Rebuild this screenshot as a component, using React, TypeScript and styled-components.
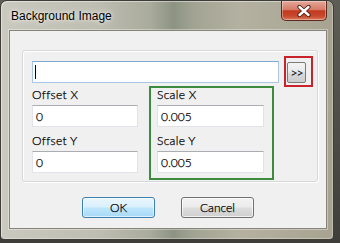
import React from 'react'
import styled, {createGlobalStyle} from 'styled-components'

const GlobalStyle = createGlobalStyle`
  html, body {
    margin: 0;
    padding: 0;
    background: #4a4944;
  }
  body {
    width: 340px;
    height: 243px;
    overflow: hidden;
    font-family: "Liberation Sans", Arial, sans-serif;
  }
`

const Desktop = styled.div`
  width: 340px;
  height: 243px;
  background: linear-gradient(180deg, #5e5d56 0%, #3f3e3a 100%);
`

const Window = styled.div`
  box-sizing: border-box;
  width: 334px;
  height: 240px;
  display: flex;
  flex-direction: column;
  padding: 0 6px 10px 8px;
  border: 1px solid #3d3c36;
  border-radius: 7px 7px 4px 4px;
  background:
    linear-gradient(90deg, #c9c9bf 0%, #bdbdb1 30%, #a9ab9c 45%, #8d9383 52%, #a2a493 58%, #b4b1a1 72%, #a7a390 100%);
  box-shadow: inset 1px 1px 0 rgba(255, 255, 255, 0.45), inset -1px -1px 0 rgba(255, 255, 255, 0.3);
`

const TitleBar = styled.div`
  height: 29px;
  display: flex;
  justify-content: space-between;
  align-items: flex-start;
`

const Title = styled.div`
  padding: 8px 0 0 2px;
  font-size: 12px;
  line-height: 14px;
  color: #000;
  text-shadow: 0 0 6px rgba(255, 255, 255, 0.9), 0 0 3px rgba(255, 255, 255, 0.7);
`

const CloseButton = styled.div`
  box-sizing: border-box;
  width: 46px;
  height: 20px;
  display: flex;
  align-items: center;
  justify-content: center;
  border: 1px solid #5a2a22;
  border-top: none;
  border-radius: 0 0 5px 5px;
  background: linear-gradient(180deg, #e3a89a 0%, #d57b67 45%, #c2391f 52%, #c74a2e 80%, #dc7a58 100%);
  box-shadow: inset 0 0 0 1px rgba(255, 255, 255, 0.35);
`

const Client = styled.div`
  flex: 1;
  display: flex;
  flex-direction: column;
  background: #f0f0f0;
  border: 1px solid #86857a;
  box-shadow: 0 0 0 1px rgba(255, 255, 255, 0.35);
  font-family: Lato, "Liberation Sans", sans-serif;
  font-weight: 300;
  -webkit-text-stroke: 0.25px #000;
`

const GroupBox = styled.div`
  margin: 19px 8px 0 12px;
  padding: 10px 4px 1px 9px;
  border: 1px solid #d5d9db;
  border-radius: 3px;
  box-shadow: inset 1px 1px 0 #fff, 1px 1px 0 #fff;
`

const PathRow = styled.div`
  display: flex;
  align-items: center;
  gap: 5px;
`

const TextBox = styled.div<{$focused?: boolean; $width?: number}>`
  box-sizing: border-box;
  height: 22px;
  ${p => p.$width ? `width: ${p.$width}px;` : 'flex: 1;'}
  display: flex;
  align-items: center;
  padding-left: 3px;
  background: #fff;
  border: 1px solid ${p => p.$focused ? '#a9c7e4' : '#e2e3ea'};
  border-top-color: ${p => p.$focused ? '#7ea9d4' : '#abadb3'};
  font-size: 12px;
  color: #000;
`

const Caret = styled.span`
  width: 1px;
  height: 14px;
  margin-left: -1px;
  background: #000;
`

const AnnotationFrame = styled.div<{$color: string}>`
  border: 2px solid ${p => p.$color};
`

const BrowseFrame = styled(AnnotationFrame)`
  margin: -5px 0 -4px 0;
  padding: 4px 5px 2px 1px;
`

const SmallButton = styled.div`
  box-sizing: border-box;
  width: 19px;
  height: 21px;
  display: flex;
  align-items: center;
  justify-content: center;
  padding-bottom: 1px;
  border: 1px solid #7a7a7a;
  border-radius: 2px;
  background: linear-gradient(180deg, #f4f4f4 0%, #e9e9e9 48%, #d9d9d9 52%, #cdcdcd 100%);
  font-size: 12px;
  letter-spacing: -1px;
  color: #111;
`

const FieldsRow = styled.div`
  display: flex;
  align-items: flex-start;
  gap: 11px;
  margin-top: 3px;
`

const Column = styled.div`
  margin-top: 2px;
  display: flex;
  flex-direction: column;
`

const ScaleBox = styled(AnnotationFrame)`
  display: flex;
  flex-direction: column;
  padding: 0 8px 5px 6px;
`

const Label = styled.div<{$first?: boolean}>`
  height: 13px;
  line-height: 13px;
  margin: ${p => p.$first ? '0' : '7px'} 0 4px 0;
  font-size: 12px;
  letter-spacing: 0.3px;
  color: #000;
`

const ButtonRow = styled.div`
  display: flex;
  justify-content: center;
  gap: 26px;
  margin-top: 15px;
`

const PushButton = styled.div<{$default?: boolean}>`
  box-sizing: border-box;
  width: 73px;
  height: 21px;
  display: flex;
  align-items: center;
  justify-content: center;
  border-radius: 3px;
  font-size: 12px;
  color: #000;
  border: 1px solid ${p => p.$default ? '#3c7fb1' : '#707070'};
  background: ${p => p.$default
    ? 'linear-gradient(180deg, #eaf6fd 0%, #d9f0fc 48%, #bee6fd 52%, #a7d9f5 100%)'
    : 'linear-gradient(180deg, #f2f2f2 0%, #ebebeb 48%, #dddddd 52%, #cfcfcf 100%)'};
  box-shadow: inset 0 0 0 1px ${p => p.$default ? 'rgba(255,255,255,0.6)' : 'rgba(255,255,255,0.7)'};
`

const CloseIcon = () =>
  <svg width="14" height="12" viewBox="0 0 14 12">
    <path d="M2.5 2 L11.5 10 M11.5 2 L2.5 10" stroke="#4a1a12" strokeWidth="4.2" strokeLinecap="round" />
    <path d="M2.5 2 L11.5 10 M11.5 2 L2.5 10" stroke="#fff" strokeWidth="2.4" strokeLinecap="round" />
  </svg>

interface FieldProps {
  label: string,
  value: string,
  width: number,
  first?: boolean
}

const Field: React.FC<FieldProps> = ({label, value, width, first}) =>
  <>
    <Label $first={first}>{label}</Label>
    <TextBox $width={width}>{value}</TextBox>
  </>

const App: React.FC = () =>
  <Desktop>
    <GlobalStyle />
    <Window>
      <TitleBar>
        <Title>Background Image</Title>
        <CloseButton><CloseIcon /></CloseButton>
      </TitleBar>
      <Client>
        <GroupBox>
          <PathRow>
            <TextBox $focused><Caret /></TextBox>
            <BrowseFrame $color="#c8232b">
              <SmallButton>&gt;&gt;</SmallButton>
            </BrowseFrame>
          </PathRow>
          <FieldsRow>
            <Column>
              <Field first label="Offset X" value="0" width={106} />
              <Field label="Offset Y" value="0" width={106} />
            </Column>
            <ScaleBox $color="#3d8b3d">
              <Field first label="Scale X" value="0.005" width={107} />
              <Field label="Scale Y" value="0.005" width={107} />
            </ScaleBox>
          </FieldsRow>
        </GroupBox>
        <ButtonRow>
          <PushButton $default>OK</PushButton>
          <PushButton>Cancel</PushButton>
        </ButtonRow>
      </Client>
    </Window>
  </Desktop>

export default App
